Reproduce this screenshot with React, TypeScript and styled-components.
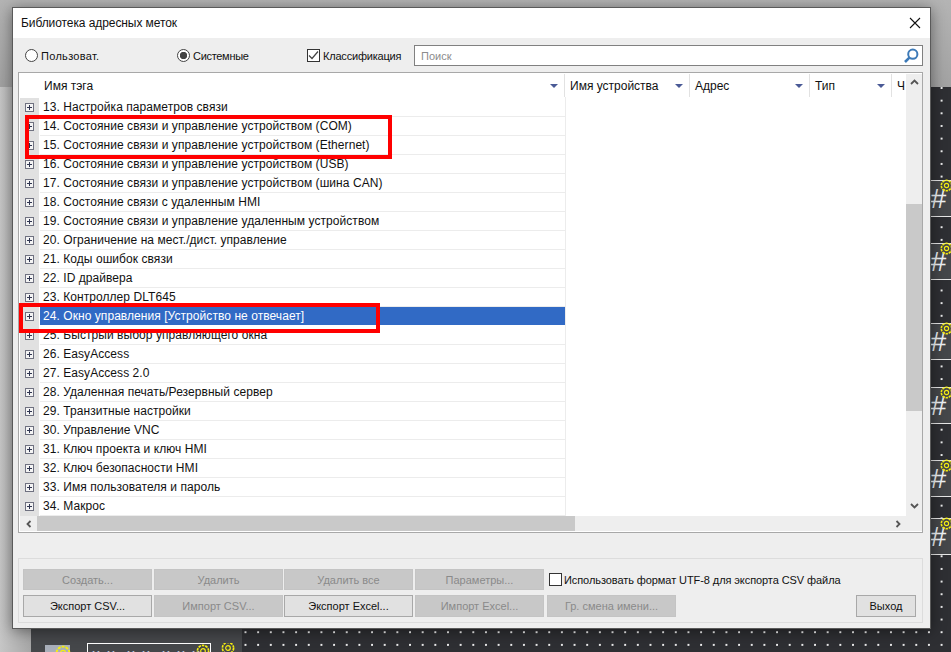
import { createGlobalStyle, styled } from "styled-components";

const GlobalStyle = createGlobalStyle`
  html, body {
    margin: 0;
    padding: 0;
    overflow: hidden;
  }
  * {
    box-sizing: border-box;
  }
`;

const rows = [
  "13. Настройка параметров связи",
  "14. Состояние связи и управление устройством (COM)",
  "15. Состояние связи и управление устройством (Ethernet)",
  "16. Состояние связи и управление устройством (USB)",
  "17. Состояние связи и управление устройством (шина CAN)",
  "18. Состояние связи с удаленным HMI",
  "19. Состояние связи и управление удаленным устройством",
  "20. Ограничение на мест./дист. управление",
  "21. Коды ошибок связи",
  "22. ID драйвера",
  "23. Контроллер DLT645",
  "24. Окно управления [Устройство не отвечает]",
  "25. Быстрый выбор управляющего окна",
  "26. EasyAccess",
  "27. EasyAccess 2.0",
  "28. Удаленная печать/Резервный сервер",
  "29. Транзитные настройки",
  "30. Управление VNC",
  "31. Ключ проекта и ключ HMI",
  "32. Ключ безопасности HMI",
  "33. Имя пользователя и пароль",
  "34. Макрос",
];

const columns = [
  { name: "Имя тэга", width: 545, pad: 24, arrow: true },
  { name: "Имя устройства", width: 125, pad: 5, arrow: true },
  { name: "Адрес", width: 120, pad: 5, arrow: true },
  { name: "Тип", width: 82, pad: 5, arrow: true },
  { name: "Ч", width: 14, pad: 5, arrow: false },
];

const tileTops = [93, 156, 236, 300, 373, 431];

export default function App() {
  return (
    <>
      <GlobalStyle />
      <Stage>
        <TopStrip />
        <Workspace>
          <LeftStrip />
          <ToolPanel>
            <ToolRow>
              <CalendarIcon>
                <GearMark size={16} />
              </CalendarIcon>
              <NumberBox>
                <NumberText>H H&nbsp; H H&nbsp; H H H</NumberText>
                <BoxGear>
                  <GearMark size={14} />
                </BoxGear>
              </NumberBox>
              <LooseGear>
                <GearMark size={14} />
              </LooseGear>
            </ToolRow>
          </ToolPanel>
          <Canvas>
            {tileTops.map((top) => (
              <HashTile key={top} $top={top}>
                <HashGlyph>#</HashGlyph>
                <TileGear>
                  <GearMark size={13} />
                </TileGear>
              </HashTile>
            ))}
          </Canvas>
        </Workspace>

        <Dialog>
          <TitleBar>
            <TitleText>Библиотека адресных меток</TitleText>
            <CloseIcon viewBox="0 0 12 12">
              <path d="M1 1 L11 11 M11 1 L1 11" stroke="#111" strokeWidth="1.1" fill="none" />
            </CloseIcon>
          </TitleBar>
          <Client>
            <Toolbar>
              <Option $width={152} $spacing={0.3}>
                <RadioMark />
                Пользоват.
              </Option>
              <Option $width={130} $spacing={-0.3}>
                <RadioMark $checked />
                Системные
              </Option>
              <Option $width={107} $spacing={-0.2}>
                <CheckMark>
                  <svg width="11" height="11" viewBox="0 0 11 11">
                    <path d="M1 5.5 L4 8.5 L10 1.5" stroke="#444" strokeWidth="1.2" fill="none" />
                  </svg>
                </CheckMark>
                Классификация
              </Option>
              <SearchField>
                <SearchHint>Поиск</SearchHint>
                <svg width="16" height="16" viewBox="0 0 16 16">
                  <circle cx="9.8" cy="6.2" r="4.6" stroke="#3d7ab8" strokeWidth="2" fill="none" />
                  <path d="M6.4 9.6 L2 14" stroke="#3d7ab8" strokeWidth="2.6" />
                </svg>
              </SearchField>
            </Toolbar>

            <TableFrame>
              <TablePane>
                <HeaderRow>
                  {columns.map((col) => (
                    <HeaderCell key={col.name} $width={col.width} $pad={col.pad}>
                      <span>{col.name}</span>
                      {col.arrow && <SortArrow />}
                    </HeaderCell>
                  ))}
                </HeaderRow>
                <RowList>
                  {rows.map((row) => (
                    <Row key={row}>
                      <Gutter>
                        <Expander />
                      </Gutter>
                      <RowLabel $selected={row.startsWith("24.")}>{row}</RowLabel>
                    </Row>
                  ))}
                </RowList>
                <HScroll>
                  <ScrollButton $width={17}>
                    <svg width="8" height="8" viewBox="0 0 8 8">
                      <path d="M5.5 1 L2.5 4 L5.5 7" stroke="#555" strokeWidth="1.8" fill="none" />
                    </svg>
                  </ScrollButton>
                  <HThumb />
                  <ScrollButton $width={17} $end>
                    <svg width="8" height="8" viewBox="0 0 8 8">
                      <path d="M2.5 1 L5.5 4 L2.5 7" stroke="#555" strokeWidth="1.8" fill="none" />
                    </svg>
                  </ScrollButton>
                </HScroll>
              </TablePane>
              <VScroll>
                <VButton>
                  <svg width="9" height="8" viewBox="0 0 9 8">
                    <path d="M1 6 L4.5 2.5 L8 6" stroke="#555" strokeWidth="1.8" fill="none" />
                  </svg>
                </VButton>
                <VThumb />
                <VButton $end>
                  <svg width="9" height="8" viewBox="0 0 9 8">
                    <path d="M1 2 L4.5 5.5 L8 2" stroke="#555" strokeWidth="1.8" fill="none" />
                  </svg>
                </VButton>
              </VScroll>
            </TableFrame>

            <ButtonGroup>
              <ActionButton disabled>Создать...</ActionButton>
              <ActionButton disabled>Удалить</ActionButton>
              <ActionButton disabled>Удалить все</ActionButton>
              <ActionButton disabled>Параметры...</ActionButton>
              <Utf8Option>
                <CheckMark />
                Использовать формат UTF-8 для экспорта CSV файла
              </Utf8Option>
              <ActionButton $tall>Экспорт CSV...</ActionButton>
              <ActionButton $tall disabled>
                Импорт CSV...
              </ActionButton>
              <ActionButton $tall>Экспорт Excel...</ActionButton>
              <ActionButton $tall disabled>
                Импорт Excel...
              </ActionButton>
              <ActionButton $tall disabled>
                Гр. смена имени...
              </ActionButton>
              <ExitButton>Выход</ExitButton>
            </ButtonGroup>
          </Client>
        </Dialog>

        <Highlight $x={25} $y={115} $w={367} $h={44} />
        <Highlight $x={19} $y={303} $w={361} $h={30} />
      </Stage>
    </>
  );
}

function GearMark({ size }: { size: number }) {
  return (
    <svg width={size} height={size} viewBox="0 0 14 14">
      <circle cx="7" cy="7" r="5.6" stroke="#f5ee10" strokeWidth="1.7" strokeDasharray="2.6 0.9" fill="none" />
      <circle cx="7" cy="7" r="2.3" stroke="#f5ee10" strokeWidth="1.2" fill="none" />
    </svg>
  );
}

const uiFont = `"Liberation Sans", Arial, sans-serif`;

const Stage = styled.div`
  position: relative;
  width: 951px;
  height: 652px;
  overflow: hidden;
  display: flex;
  flex-direction: column;
  font-family: ${uiFont};
  font-size: 12px;
  color: #111;
`;
const TopStrip = styled.div`
  height: 87px;
  flex: none;
  background: linear-gradient(180deg, #b4b4b4 0%, #a2a2a2 100%);
`;
const Workspace = styled.div`
  flex: 1;
  display: flex;
  min-height: 0;
`;
const LeftStrip = styled.div`
  width: 31px;
  flex: none;
  background: linear-gradient(90deg, #c6c6c6 0%, #a6a6a6 100%);
`;
const ToolPanel = styled.div`
  width: 211px;
  flex: none;
  background: #45474a;
  display: flex;
  flex-direction: column;
  justify-content: flex-end;
`;
const ToolRow = styled.div`
  height: 9px;
  overflow: hidden;
  display: flex;
  align-items: flex-start;
  padding-left: 14px;
`;
const CalendarIcon = styled.div`
  position: relative;
  width: 25px;
  height: 24px;
  margin-top: 2px;
  background: #a9afba;
  svg {
    position: absolute;
    left: 10px;
    top: 0;
  }
`;
const NumberBox = styled.div`
  position: relative;
  width: 124px;
  height: 30px;
  margin-left: 17px;
  border: 1px solid #fff;
  padding: 5px 0 0 4px;
`;
const NumberText = styled.div`
  color: #b9c4d8;
  font-size: 11px;
  line-height: 12px;
  letter-spacing: 2px;
  white-space: nowrap;
  font-weight: bold;
`;
const BoxGear = styled.div`
  position: absolute;
  right: 0;
  top: 0;
`;
const LooseGear = styled.div`
  margin: -2px 0 0 10px;
`;
const Canvas = styled.div`
  position: relative;
  flex: 1;
  background-color: #2e2f33;
  background-image: radial-gradient(circle at 1px 1px, #f4f4f4 0.7px, transparent 1px);
  background-size: 12.67px 12.67px;
  background-position: 2.5px 0;
`;
const HashTile = styled.div<{ $top: number }>`
  position: absolute;
  left: 688px;
  right: 0;
  top: ${(p) => p.$top}px;
  height: 37px;
  background: #45474a;
  border-top: 1px solid #e8e8e8;
  border-bottom: 1px solid #e8e8e8;
`;
const HashGlyph = styled.div`
  position: absolute;
  left: 0;
  top: 2px;
  width: 16px;
  text-align: center;
  color: #eef2f6;
  font-size: 28px;
  line-height: 32px;
  font-style: italic;
`;
const TileGear = styled.div`
  position: absolute;
  left: 10px;
  top: -2px;
  line-height: 0;
`;
const Dialog = styled.div`
  position: absolute;
  left: 12px;
  top: 7px;
  width: 919px;
  height: 622px;
  display: flex;
  flex-direction: column;
  background: #eeeeee;
  border: 1px solid #5a5a5a;
  box-shadow: 0 2px 14px rgba(0, 0, 0, 0.45);
`;
const TitleBar = styled.div`
  height: 30px;
  flex: none;
  display: flex;
  align-items: center;
  justify-content: space-between;
  padding: 0 9px 0 8px;
  background: #fff;
`;
const TitleText = styled.div`
  font-size: 12px;
  letter-spacing: -0.08px;
`;
const CloseIcon = styled.svg`
  width: 12px;
  height: 12px;
`;
const Client = styled.div`
  flex: 1;
  display: flex;
  flex-direction: column;
  padding: 0 7px 5px 5px;
`;
const Toolbar = styled.div`
  display: flex;
  align-items: center;
  height: 21px;
  margin: 7px 0 6px;
  padding-left: 7px;
`;
const Option = styled.div<{ $width: number; $spacing: number }>`
  width: ${(p) => p.$width}px;
  display: flex;
  align-items: center;
  gap: 3px;
  white-space: nowrap;
  font-size: 11px;
  letter-spacing: ${(p) => p.$spacing}px;
`;
const RadioMark = styled.span<{ $checked?: boolean }>`
  width: 13px;
  height: 13px;
  flex: none;
  border-radius: 50%;
  border: 1px solid #444;
  background: ${(p) => (p.$checked ? "radial-gradient(circle, #444 0 3.4px, #fff 4px)" : "#fff")};
`;
const CheckMark = styled.span`
  width: 13px;
  height: 13px;
  flex: none;
  display: flex;
  align-items: center;
  justify-content: center;
  border: 1px solid #333;
  background: #fff;
`;
const SearchField = styled.div`
  flex: 1;
  height: 21px;
  display: flex;
  align-items: center;
  justify-content: space-between;
  padding: 0 3px 0 6px;
  background: #fff;
  border: 1px solid #808080;
  font-size: 11px;
`;
const SearchHint = styled.span`
  color: #8c8c8c;
`;
const TableFrame = styled.div`
  height: 461px;
  flex: none;
  display: flex;
  padding: 1px;
  background: #fff;
  border: 1px solid #a8a8a8;
`;
const TablePane = styled.div`
  width: 886px;
  flex: none;
  display: flex;
  flex-direction: column;
`;
const HeaderRow = styled.div`
  height: 23px;
  flex: none;
  display: flex;
  overflow: hidden;
`;
const HeaderCell = styled.div<{ $width: number; $pad: number }>`
  width: ${(p) => p.$width}px;
  flex: none;
  display: flex;
  align-items: center;
  justify-content: space-between;
  padding: 0 6px 0 ${(p) => p.$pad}px;
  border-right: 1px solid #e2e2e2;
  overflow: hidden;
  white-space: nowrap;
  &:last-child {
    border-right: none;
    padding-right: 0;
  }
`;
const SortArrow = styled.span`
  width: 0;
  height: 0;
  flex: none;
  border-left: 4px solid transparent;
  border-right: 4px solid transparent;
  border-top: 4px solid #4a5a96;
`;
const RowList = styled.div`
  height: 419px;
  flex: none;
  padding-top: 1px;
  width: 546px;
  border-right: 1px solid #ececec;
  overflow: hidden;
`;
const Row = styled.div`
  height: 19px;
  display: flex;
`;
const Gutter = styled.div`
  width: 19px;
  flex: none;
  display: flex;
  align-items: center;
  justify-content: center;
  background: #e1e1e1;
  margin-right: 1px;
`;
const Expander = styled.span`
  position: relative;
  width: 9px;
  height: 9px;
  border: 1px solid #6f7180;
  background: #f4f4f4;
  &::before,
  &::after {
    content: "";
    position: absolute;
    background: #2f3550;
  }
  &::before {
    left: 1px;
    top: 3px;
    width: 5px;
    height: 1px;
  }
  &::after {
    left: 3px;
    top: 1px;
    width: 1px;
    height: 5px;
  }
`;
const RowLabel = styled.div<{ $selected?: boolean }>`
  flex: 1;
  min-width: 0;
  padding-left: 3px;
  line-height: 18px;
  white-space: nowrap;
  overflow: hidden;
  letter-spacing: 0.06px;
  color: ${(p) => (p.$selected ? "#fff" : "#111")};
  background: ${(p) => (p.$selected ? "#316ac5" : "#fff")};
  border-bottom: 1px solid ${(p) => (p.$selected ? "#fff" : "#ececec")};
`;
const HScroll = styled.div`
  height: 15px;
  flex: none;
  display: flex;
  background: #eeeeee;
`;
const ScrollButton = styled.div<{ $width: number; $end?: boolean }>`
  width: ${(p) => p.$width}px;
  flex: none;
  display: flex;
  align-items: center;
  justify-content: center;
  margin-left: ${(p) => (p.$end ? "auto" : "0")};
`;
const HThumb = styled.div`
  width: 538px;
  background: #c9c9c9;
`;
const VScroll = styled.div`
  width: 16px;
  height: 457px;
  flex: none;
  display: flex;
  flex-direction: column;
  background: #eeeeee;
`;
const VButton = styled.div<{ $end?: boolean }>`
  height: 16px;
  flex: none;
  display: flex;
  align-items: center;
  justify-content: center;
  margin-top: ${(p) => (p.$end ? "87px" : "0")};
`;
const VThumb = styled.div`
  height: 207px;
  flex: none;
  margin-top: 114px;
  background: #c9c9c9;
`;
const ButtonGroup = styled.div`
  height: 65px;
  flex: none;
  margin-top: 25px;
  display: grid;
  grid-template-columns: 131px 130px 131px 132px 129px 1fr;
  grid-template-rows: 21px 22px;
  row-gap: 5px;
  padding: 10px 6px 5px 4px;
  border: 1px solid #dcdcdc;
`;
const ActionButton = styled.button<{ $tall?: boolean }>`
  width: 129px;
  height: ${(p) => (p.$tall ? 22 : 21)}px;
  padding: 0;
  font-family: ${uiFont};
  font-size: 11px;
  color: #111;
  background: #e1e1e1;
  border: 1px solid #a8a8a8;
  border-radius: 0;
  &:disabled {
    color: #8a8a8a;
    background: #c8c8c8;
    border-color: #c4c4c4;
  }
`;
const Utf8Option = styled.div`
  grid-column: 5 / 7;
  display: flex;
  align-items: center;
  gap: 2px;
  padding-left: 2px;
  white-space: nowrap;
  font-size: 11px;
  letter-spacing: -0.08px;
`;
const ExitButton = styled(ActionButton)`
  width: 60px;
  height: 22px;
  justify-self: end;
`;
const Highlight = styled.div<{ $x: number; $y: number; $w: number; $h: number }>`
  position: absolute;
  left: ${(p) => p.$x}px;
  top: ${(p) => p.$y}px;
  width: ${(p) => p.$w}px;
  height: ${(p) => p.$h}px;
  border: 4px solid #ff0000;
`;
